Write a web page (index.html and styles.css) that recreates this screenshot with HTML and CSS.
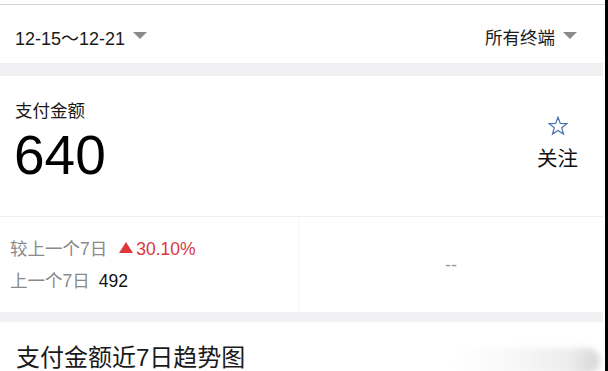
FILE: index.html
```html
<!DOCTYPE html>
<html lang="zh-CN">
<head>
<meta charset="utf-8">
<title>支付金额</title>
<link rel="stylesheet" href="styles.css">
</head>
<body>
<div class="page">
  <div class="topline"></div>
  <div class="filter">
    <div class="select">
      <span class="date">12-15～12-21</span>
      <svg class="caret" width="14" height="8" viewBox="0 0 14 8"><path d="M0 0 H14 L7 7 Z" fill="#8a8a8a"/></svg>
    </div>
    <div class="select">
      <span>所有终端</span>
      <svg class="caret" width="14" height="8" viewBox="0 0 14 8"><path d="M0 0 H14 L7 7 Z" fill="#8a8a8a"/></svg>
    </div>
  </div>
  <div class="band"></div>
  <div class="card">
    <div class="metric">
      <div class="metric-label">支付金额</div>
      <div class="metric-value">640</div>
    </div>
    <div class="follow">
      <svg class="star" width="20" height="20" viewBox="0 0 20 20"><path d="M10 1.2 L12.3 7.4 L18.9 7.6 L13.7 11.7 L15.5 18.1 L10 14.4 L4.5 18.1 L6.3 11.7 L1.1 7.6 L7.7 7.4 Z" fill="none" stroke="#4a70b3" stroke-width="1.2" stroke-linejoin="miter"/></svg>
      <div class="follow-text">关注</div>
    </div>
  </div>
  <div class="compare">
    <div class="cell cell-left">
      <div class="line"><span class="muted">较上一个7日</span><span class="up"><svg class="up-icon" width="14" height="11" viewBox="0 0 14 11"><path d="M7 0 L14 11 H0 Z" fill="#e0383a"/></svg>30.10%</span></div>
      <div class="line"><span class="muted">上一个7日</span><span class="prev">492</span></div>
    </div>
    <div class="cell cell-right">
      <span class="dash">--</span>
    </div>
  </div>
  <div class="band band-2"></div>
  <div class="trend">
    <div class="trend-title">支付金额近7日趋势图</div>
    <div class="watermark"></div>
  </div>
</div>
</body>
</html>
```
FILE: styles.css
```css
html, body {
  margin: 0;
  padding: 0;
  background: #000;
  height: 100%;
  overflow: hidden;
}
.page {
  width: 605px;
  height: 100%;
  background: #fff;
  font-family: "Liberation Sans", "Noto Sans CJK SC", sans-serif;
  color: #1a1a1a;
}
.topline {
  height: 4px;
  border-bottom: 1px solid #d4d4d4;
}
.filter {
  height: 58px;
  display: flex;
  align-items: center;
  justify-content: space-between;
  padding: 5px 28px 0 15px;
  box-sizing: border-box;
  font-size: 17.5px;
}
.date {
  font-size: 18px;
}
.select {
  display: flex;
  align-items: center;
  gap: 8px;
}
.caret {
  display: block;
  margin-top: -1px;
}
.band {
  width: 603px;
  height: 13px;
  background: #f1f1f3;
}
.card {
  height: 140px;
  display: flex;
  justify-content: space-between;
  padding: 23px 27px 0 15px;
  box-sizing: border-box;
}
.metric-label {
  font-size: 17.5px;
  line-height: 24px;
  color: #1a1a1a;
}
.metric-value {
  font-size: 55px;
  line-height: 55px;
  margin-top: 5px;
  color: #000;
  margin-left: -1px;
}
.follow {
  display: flex;
  flex-direction: column;
  align-items: center;
  padding-top: 17px;
}
.star {
  display: block;
}
.follow-text {
  font-size: 20.5px;
  line-height: 26px;
  margin-top: 10px;
  color: #111;
}
.compare {
  height: 96px;
  border-top: 1px solid #efefef;
  display: grid;
  grid-template-columns: 299px 1fr;
  box-sizing: border-box;
  width: 603px;
}
.cell-left {
  border-right: 1px solid #f6f6f6;
  padding: 20px 0 0 10px;
  display: flex;
  flex-direction: column;
  gap: 8px;
}
.line {
  display: flex;
  align-items: center;
  font-size: 17.5px;
  line-height: 24px;
}
.muted {
  color: #8a8a8a;
}
.up {
  display: flex;
  align-items: center;
  color: #d8393c;
  margin-left: 12px;
}
.up-icon {
  display: block;
  margin-right: 3px;
  margin-top: -3px;
}
.prev {
  margin-left: 9px;
  color: #111;
}
.cell-right {
  display: flex;
  align-items: center;
  justify-content: center;
  padding: 0 0 0 0;
}
.dash {
  color: #9a9a9a;
  font-size: 18px;
  line-height: 20px;
}
.band-2 {
  height: 10px;
}
.trend {
  position: relative;
  padding: 21px 0 0 16px;
}
.trend-title {
  font-size: 24px;
  line-height: 30px;
  color: #1a1a1a;
}
.watermark {
  position: absolute;
  left: 455px;
  top: 26px;
  width: 145px;
  height: 26px;
  border-radius: 13px;
  background: linear-gradient(90deg, rgba(245,245,245,0) 0%, rgba(240,240,240,0.6) 45%, rgba(232,232,232,0.85) 80%, #d6d6d6 100%);
  filter: blur(3px);
}
```
